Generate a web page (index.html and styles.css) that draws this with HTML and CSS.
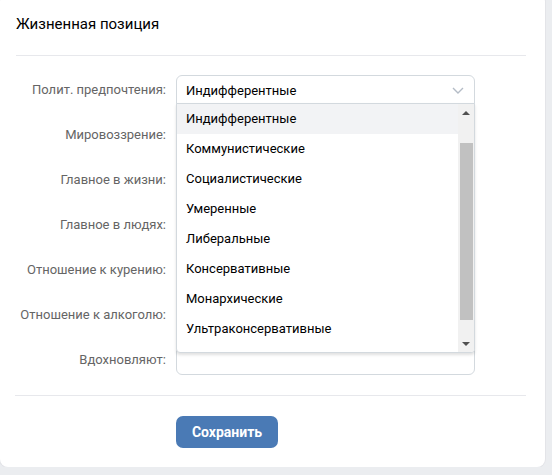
FILE: index.html
```html
<!DOCTYPE html>
<html lang="ru">
<head>
<meta charset="utf-8">
<link rel="stylesheet" href="styles.css">
</head>
<body>
<div class="card">
  <div class="header">Жизненная позиция</div>
  <div class="divider top"></div>
  <div class="form">
    <div class="row">
      <div class="label">Полит. предпочтения:</div>
      <div class="field">
        <div class="select open">
          <span>Индифферентные</span>
          <svg class="chev" width="12" height="7" viewBox="0 0 12 7"><path d="M1 1l5 5 5-5" fill="none" stroke="#b4bcc6" stroke-width="1.4"/></svg>
        </div>
        <div class="dropdown">
          <div class="items">
            <div class="item active">Индифферентные</div>
            <div class="item">Коммунистические</div>
            <div class="item">Социалистические</div>
            <div class="item">Умеренные</div>
            <div class="item">Либеральные</div>
            <div class="item">Консервативные</div>
            <div class="item">Монархические</div>
            <div class="item">Ультраконсервативные</div>
          </div>
          <div class="scrollbar">
            <div class="arrow up"></div>
            <div class="track"><div class="thumb"></div></div>
            <div class="arrow down"></div>
          </div>
        </div>
      </div>
    </div>
    <div class="row">
      <div class="label">Мировоззрение:</div>
      <div class="field"><div class="select"></div></div>
    </div>
    <div class="row">
      <div class="label">Главное в жизни:</div>
      <div class="field"><div class="select"></div></div>
    </div>
    <div class="row">
      <div class="label">Главное в людях:</div>
      <div class="field"><div class="select"></div></div>
    </div>
    <div class="row">
      <div class="label">Отношение к курению:</div>
      <div class="field"><div class="select"></div></div>
    </div>
    <div class="row">
      <div class="label">Отношение к алкоголю:</div>
      <div class="field"><div class="select"></div></div>
    </div>
    <div class="row">
      <div class="label">Вдохновляют:</div>
      <div class="field"><div class="select input"></div></div>
    </div>
  </div>
  <div class="divider bottom"></div>
  <div class="actions">
    <button class="btn">Сохранить</button>
  </div>
</div>
</body>
</html>
```
FILE: styles.css
```css
html, body {
  margin: 0;
  padding: 0;
  background: #ebedf0;
  font-family: Roboto, "Noto Sans", Arial, sans-serif;
}
.card {
  width: 545px;
  margin-top: -6px;
  background: #fff;
  border-radius: 8px;
  box-shadow: 0 0 0 1px #e3e4e8;
  padding-top: 6px;
  padding-bottom: 19px;
}
.header {
  padding: 14px 16px 21px;
  font-size: 15px;
  line-height: 20px;
  color: #000;
}
.divider {
  height: 1px;
  background: #e7e8ec;
  margin: 0 19px 0 16px;
}
.divider.bottom {
  margin-left: 15px;
}
.form {
  padding-top: 19px;
  padding-bottom: 20px;
  display: flex;
  flex-direction: column;
  gap: 15px;
}
.row {
  display: flex;
  align-items: center;
  gap: 10px;
  height: 30px;
}
.label {
  width: 166px;
  text-align: right;
  font-size: 13px;
  color: #656565;
  line-height: 16px;
}
.field {
  position: relative;
  width: 299px;
  height: 30px;
}
.select {
  box-sizing: border-box;
  height: 30px;
  border: 1px solid #d3d9de;
  border-radius: 6px;
  background: #fff;
  display: flex;
  align-items: center;
  justify-content: space-between;
  padding: 0 10px 0 9px;
  font-size: 13px;
  color: #000;
}
.select.open {
  border-bottom-left-radius: 0;
  border-bottom-right-radius: 0;
}
.chev {
  margin-top: 1px;
}
.dropdown {
  position: absolute;
  z-index: 5;
  left: 0;
  top: 28px;
  width: 299px;
  height: 250px;
  box-sizing: border-box;
  border: 1px solid #d3d9de;
  border-radius: 0 0 4px 4px;
  background: #fff;
  box-shadow: 0 2px 3px rgba(0, 0, 0, 0.12);
  display: flex;
  overflow: hidden;
}
.items {
  flex: 1;
  overflow: hidden;
}
.item {
  height: 30px;
  line-height: 30px;
  padding-left: 9px;
  font-size: 13px;
  color: #000;
}
.item.active {
  background: #f2f3f5;
}
.scrollbar {
  width: 16px;
  background: #f1f1f1;
  display: flex;
  flex-direction: column;
  align-items: center;
}
.arrow {
  width: 0;
  height: 0;
  border-left: 4px solid transparent;
  border-right: 4px solid transparent;
}
.arrow.up {
  margin-top: 7px;
  border-bottom: 4px solid #505050;
}
.arrow.down {
  margin-bottom: 6px;
  border-top: 4px solid #505050;
}
.track {
  flex: 1;
  width: 100%;
  padding-top: 28px;
  padding-bottom: 18px;
  box-sizing: border-box;
  display: flex;
  justify-content: flex-end;
}
.thumb {
  width: 13px;
  height: 177px;
  background: #c1c1c1;
  margin-right: 1px;
}
.actions {
  padding: 20px 0 0 176px;
}
.btn {
  width: 102px;
  height: 32px;
  border: none;
  border-radius: 7px;
  background: #4a7ab5;
  color: #fff;
  font-family: Roboto, "Noto Sans", Arial, sans-serif;
  font-size: 14px;
  font-weight: 700;
  padding: 0;
}
```
